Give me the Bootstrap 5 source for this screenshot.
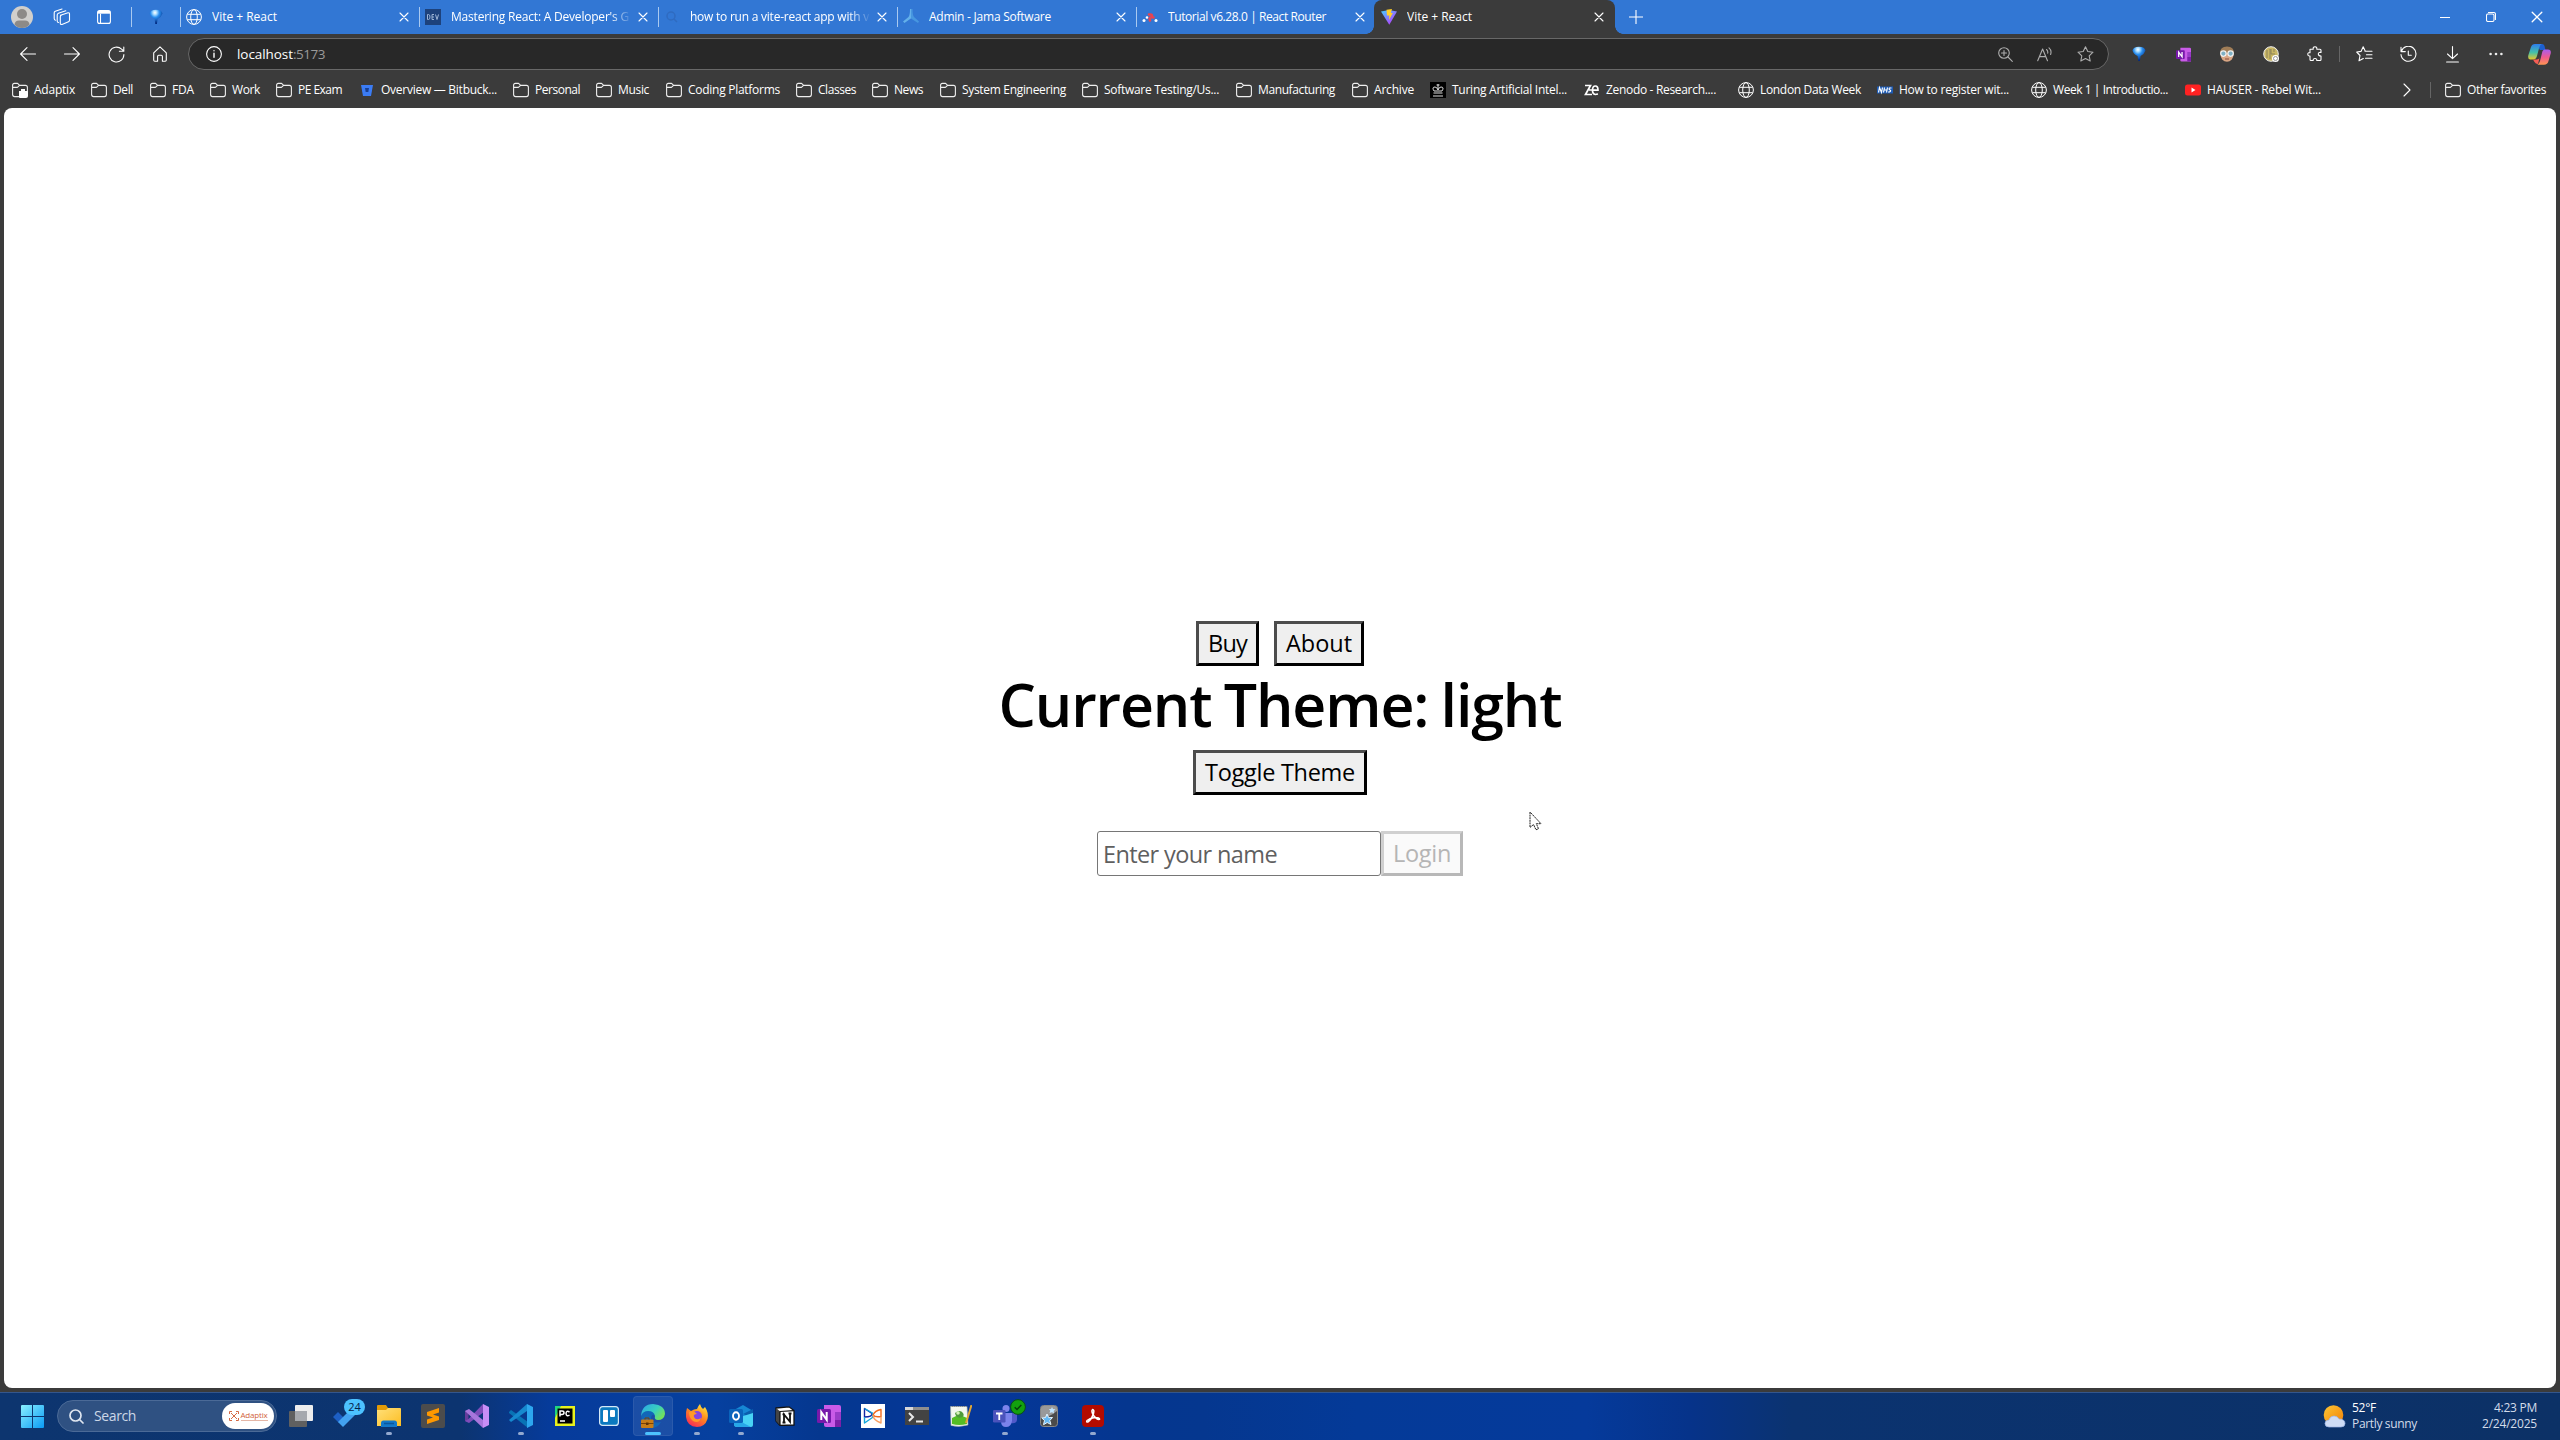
<!DOCTYPE html>
<html lang="en">
<head>
<meta charset="utf-8">
<title>Vite + React</title>
<link rel="stylesheet" href="https://cdn.jsdelivr.net/npm/bootstrap@5.3.0/dist/css/bootstrap.min.css">
<style>
html,body{height:100%;overflow:hidden}
body{background:#3b3b3b;color:#fff;font:12px/16px "Open Sans","Noto Sans",sans-serif}
svg{display:block;flex:none}
.ln{fill:none;stroke:#fff;stroke-width:1.1;stroke-linecap:round;stroke-linejoin:round}
.fit{display:inline-block;white-space:pre;flex:none}
.tabstrip{height:34px;background:#3277d4}
.cell{display:flex;align-items:center;justify-content:center;flex:none}
.vr-line{width:1px;height:20px;background:#a9c9f0;flex:none}
.tab-item{width:239px;height:34px;padding-left:6px;position:relative}
.tab-item .vr-line{margin-left:-6px;margin-right:5px}
.tab-title{width:181px;height:18px;margin-left:10px;overflow:hidden;line-height:18px}
.tab-fade{-webkit-mask-image:linear-gradient(90deg,#000 88%,transparent)}
.tab-close{width:22px}
.tab-live{background:#3b3b3b;border-radius:8px 8px 0 0;width:241px;margin-left:-1px;padding-left:7px}
.tab-live::before,.tab-live::after{content:"";position:absolute;bottom:0;width:8px;height:8px}
.tab-live::before{left:-8px;background:radial-gradient(circle at 0 0,#3277d4 7.5px,#3b3b3b 8px)}
.tab-live::after{right:-8px;background:radial-gradient(circle at 100% 0,#3277d4 7.5px,#3b3b3b 8px)}
.toolbar-row{height:40px}
.tb{width:44px}
.address{height:32px;width:1921px;margin-left:6px;background:#282828;border:1px solid #686868;border-radius:16px;font-size:13.5px;padding-left:17px}
.address .ad{width:40px}
.favrow{height:32px;padding-left:12px;margin-bottom:2px}
.fav{gap:6px;height:32px;flex:none}
.page{height:1280px;margin:0 4px;background:#fff;border-radius:8px;font-family:"Open Sans","Noto Sans",sans-serif;color:#000}
.pb{height:45px;border:3px solid;border-color:#4c4c4c #000 #000 #4c4c4c;background:#efefef;font-size:23.5px;line-height:37px}
.pb-off{color:#b5b5b5;background:#fafafa;border-color:#d0d0d0 #b8b8b8 #b8b8b8 #d0d0d0}
.theme-title{font-size:59px;line-height:76px;font-weight:600;height:84px;margin:0;word-spacing:-2px}
.name-box{width:284px;height:45px;border:1px solid #767676;border-radius:3px;font-size:23.5px;line-height:44px;color:#5f5f5f;padding-left:5px}
.pointer{position:absolute;left:1529px;top:811px}
.taskbar{height:48px;margin-top:4px;border-top:1px solid #34568c;background:linear-gradient(90deg,#0d356f 0,#0c3470 18%,#063b9b 21.5%,#06409f 28%,#05378f 32%,#05379a 38%,#05368f 44%,#05378f 47%,#043a98 53%,#053a9b 62%,#06338a 66%,#0b3370 70%,#0c3166 100%);padding-bottom:1px}
.searchpill{width:220px;height:32px;margin-left:13px;border-radius:16px;background:#2f5182;border:1px solid #4b6a97;font-size:14px;color:#ccd7e7}
.brandpill{width:52px;height:26px;border-radius:13px;background:#fff;color:#d2623c;margin-left:auto;margin-right:2px}
.tk{width:44px;height:46px;position:relative;flex:none}
.tk.run::after,.tk.on::after{content:"";position:absolute;bottom:4px;left:19px;width:6px;height:3px;border-radius:2px;background:#93a9cf}
.tk.on::before{content:"";position:absolute;left:2px;top:3px;width:40px;height:40px;border-radius:4px;background:#ffffff16;border:1px solid #ffffff12}
.tk.on::after{left:14px;width:16px;background:#4cc2ff}
.tk svg{position:relative}
.cnt{position:absolute;left:21px;top:6px;width:21px;height:16px;border-radius:8px;background:#4cc2ff;color:#04204a;font-size:11px;line-height:16px;text-align:center}
.okdot{position:absolute;left:27px;top:6px}
.dimtext{color:#d3dcea}
</style>
<script src="https://cdn.jsdelivr.net/npm/bootstrap@5.3.0/dist/js/bootstrap.bundle.min.js"></script>
</head>
<body>
<svg width="0" height="0" class="position-absolute">
<defs>
<linearGradient id="gwin" x1="0" y1="0" x2="1" y2="1"><stop stop-color="#8af0ff"/><stop offset="1" stop-color="#0a9bf5"/></linearGradient>
<linearGradient id="gvite" x1="0" y1="0" x2=".8" y2="1"><stop stop-color="#41d1ff"/><stop offset="1" stop-color="#bd34fe"/></linearGradient>
<radialGradient id="gfun" cx=".42" cy=".2" r=".75"><stop stop-color="#fff"/><stop offset=".2" stop-color="#a8dcff"/><stop offset=".45" stop-color="#2a8ff0"/><stop offset="1" stop-color="#022a80"/></radialGradient>
<linearGradient id="gcopA" x1="0" y1="0" x2="0" y2="1"><stop stop-color="#2d7df0"/><stop offset=".55" stop-color="#45c0a8"/><stop offset="1" stop-color="#e9c52b"/></linearGradient>
<linearGradient id="gcopB" x1="0" y1="0" x2="0" y2="1"><stop stop-color="#a85cf0"/><stop offset=".5" stop-color="#ee5a90"/><stop offset="1" stop-color="#ff9650"/></linearGradient>
<linearGradient id="gsun" x1="0" y1="0" x2="1" y2="1"><stop stop-color="#fcc534"/><stop offset="1" stop-color="#f28008"/></linearGradient>
<linearGradient id="gedge" x1="0" y1="0" x2="1" y2=".6"><stop stop-color="#2aa5e8"/><stop offset=".6" stop-color="#38cfc0"/><stop offset="1" stop-color="#72e05c"/></linearGradient>
<linearGradient id="gfire" x1=".8" y1="0" x2=".2" y2="1"><stop stop-color="#ffe83c"/><stop offset=".45" stop-color="#ff8a1e"/><stop offset="1" stop-color="#f4245c"/></linearGradient>
<linearGradient id="gfold" x1="0" y1="0" x2="1" y2="1"><stop stop-color="#ffe07a"/><stop offset="1" stop-color="#fcbd22"/></linearGradient>
<symbol id="globe" viewBox="0 0 16 16"><g fill="none" stroke="#fff" stroke-width="1"><circle cx="8" cy="8" r="7.4"/><ellipse cx="8" cy="8" rx="3.3" ry="7.4"/><path d="M1.3 5.3h13.4M1.3 10.7h13.4"/></g></symbol>
<symbol id="folder" viewBox="0 0 16 16"><path fill="none" stroke="#eee" stroke-width="1.1" stroke-linejoin="round" d="M.6 3.2Q.6 1.4 2.4 1.4H5.6L7.6 3.4H13.4Q15.4 3.4 15.4 5.4V12.6Q15.4 14.6 13.4 14.6H2.6Q.6 14.6.6 12.6ZM.6 5.4H5.4L7.6 3.4"/></symbol>
<symbol id="funnel" viewBox="0 0 14 16"><path fill="url(#gfun)" d="M.5 4.500Q1 1 7 .8Q13 1 13.500 4.500Q12.500 8 8.600 10L7.900 15H6.300L5.600 10Q1.500 8 .5 4.500Z"/></symbol>
<symbol id="xx" viewBox="0 0 10 10"><path class="ln" d="M1 1l8 8M9 1l-8 8"/></symbol>
<symbol id="onenote" viewBox="0 0 24 24"><path fill="#c95be8" d="M7 1h15a2 2 0 0 1 2 2v20H9a2 2 0 0 1-2-2z"/><path fill="#9a3cc8" d="M18 8h6v8h-6z"/><path fill="#7c1fa8" d="M18 16h6v7h-6z"/><rect y="5" width="14" height="14" rx="1.500" fill="#7719aa"/><path fill="none" stroke="#fff" stroke-width="2" d="M4.300 16V8.200L9.700 15.800V8"/></symbol>
</defs>
</svg>

<header>
<nav class="tabstrip d-flex align-items-center" aria-label="Tabs">
  <div class="cell" style="width:44px"><svg width="22" height="22" viewBox="0 0 22 22"><circle cx="11" cy="11" r="11" fill="#d1cfcc"/><circle cx="11" cy="8" r="5" fill="#8d8a87"/><path fill="#8d8a87" d="M3.500 18.500Q4 14.400 8 14.400H14Q18 14.400 18.500 18.500Q15.500 22 11 22T3.500 18.500Z"/></svg></div>
  <div class="cell" style="width:36px"><svg class="ln" width="18" height="18" viewBox="0 0 18 18"><path d="M7.500 7.300L15 4.800Q16.500 4.500 16.500 6V12Q16.500 13.300 15.500 13.700L9 16.400Q7.300 16.800 7.300 15.200V8.800Q7.300 7.700 8.300 7.200M5.500 14.500Q4.200 14.500 4.200 13V7Q4.200 5.700 5.400 5.200L12.800 2.800M2.500 12.200Q1.200 12 1.200 10.600V4.800Q1.200 3.700 2.300 3.200L9 1"/></svg></div>
  <div class="cell" style="width:48px"><svg class="ln" width="14" height="14" viewBox="0 0 14 14"><rect x=".6" y=".6" width="12.800" height="12.800" rx="2"/><path fill="#fff" stroke="none" d="M1 1h12v2.700H1z"/><path d="M3.500 4v9"/></svg></div>
  <div class="cell" style="width:3px"></div><div class="vr-line"></div>
  <div class="cell" style="width:48px"><svg width="14" height="16"><use href="#funnel"/></svg></div>
  <div class="d-flex" id="tabs"></div>
  <div class="cell" style="width:41px"><svg class="ln" width="14" height="14" viewBox="0 0 14 14"><path d="M7 0v14M0 7h14"/></svg></div>
  <div class="d-flex ms-auto">
    <div class="cell" style="width:46px"><svg class="ln" width="10" height="10" viewBox="0 0 10 10"><path d="M0 5.500h10"/></svg></div>
    <div class="cell" style="width:46px"><svg class="ln" width="10" height="10" viewBox="0 0 10 10"><rect x=".5" y="2" width="7.500" height="7.500" rx="1.500"/><path d="M2.500.5H7.500Q9.500.5 9.500 2.500V7.500"/></svg></div>
    <div class="cell" style="width:46px"><svg width="12" height="12"><use href="#xx"/></svg></div>
  </div>
</nav>

<div class="toolbar-row d-flex align-items-center ps-1">
  <div class="cell" style="width:2px"></div>
  <div class="cell tb"><svg class="ln" width="16" height="14" viewBox="0 0 16 14"><path d="M15.500 7H.8M7 .6L.6 7L7 13.400"/></svg></div>
  <div class="cell tb"><svg class="ln" width="16" height="14" viewBox="0 0 16 14"><path d="M.5 7h14.700M9 .6L15.400 7L9 13.400"/></svg></div>
  <div class="cell tb"><svg class="ln" width="17" height="17" viewBox="0 0 17 17"><path d="M15.900 8.500A7.400 7.400 0 1 1 13.600 3.200L15.700 5M15.800 1v4.200h-4.400"/></svg></div>
  <div class="cell tb"><svg class="ln" width="14" height="16" viewBox="0 0 14 16"><path d="M.7 6.800L7 .9L13.300 6.800V14Q13.300 15.200 12.200 15.200H9.400V10.400Q9.400 9.300 8.300 9.300H5.700Q4.600 9.300 4.600 10.400V15.200H1.800Q.7 15.200.7 14Z"/></svg></div>
  <div class="address d-flex align-items-center">
    <svg class="ln" width="16" height="16" viewBox="0 0 16 16"><circle cx="8" cy="8" r="7.400"/><path d="M8 7.300v4M8 4.600v.2" stroke-width="1.400"/></svg>
    <div style="margin-left:15px"><span class="fit" data-w="56">localhost</span><span class="fit" style="color:#9a9a9a" data-w="32">:5173</span></div>
    <div class="d-flex ms-auto" style="padding-right:3px;opacity:.62">
      <div class="cell ad"><svg class="ln" width="15" height="15" viewBox="0 0 15 15"><circle cx="6" cy="6" r="5.300"/><path d="M10 10l4.300 4.300M6 3.500v5M3.500 6h5"/></svg></div>
      <div class="cell ad"><svg class="ln" width="16" height="15" viewBox="0 0 16 15"><path d="M.7 13.800L5.600 2L10.500 13.800M2.500 9.600h6.200M9.500 2.500Q11.200 4 10.700 6.200M12 .8Q15 3.500 13.600 7.500"/></svg></div>
      <div class="cell ad"><svg class="ln" width="17" height="16" viewBox="0 0 17 16"><path d="M8.500.8L10.800 5.500L16 6.200L12.200 9.800L13.200 15L8.500 12.500L3.800 15L4.800 9.800L1 6.200L6.200 5.500Z"/></svg></div>
    </div>
  </div>
  <div class="d-flex align-items-center ms-auto">
    <div class="cell tb"><svg width="14" height="16"><use href="#funnel"/></svg></div>
    <div class="cell tb"><svg width="15" height="15"><use href="#onenote"/></svg></div>
    <div class="cell tb"><svg width="16" height="16" viewBox="0 0 16 16"><ellipse cx="8" cy="8.500" rx="6.500" ry="7.300" fill="#d9a684"/><path fill="#a07d57" d="M1 7Q1 1 8 .6Q15 1 15 7Z"/><g fill="#7fb0c4" stroke="#f0f0f0" stroke-width="1.200"><circle cx="4.400" cy="7.600" r="2.700"/><circle cx="11.600" cy="7.600" r="2.700"/></g><path stroke="#8c4a3b" d="M6 13h4"/></svg></div>
    <div class="cell tb"><svg width="17" height="17" viewBox="0 0 17 17"><circle cx="8" cy="8" r="7.300" fill="#c9b765" stroke="#eee"/><path fill="none" stroke="#8b8158" stroke-width="1" d="M4 4v8M7 3v10M8 3v5h4M11 3v3"/><circle cx="12.500" cy="12.500" r="3.500" fill="#fff"/><circle cx="12.500" cy="12.500" r="2" fill="none" stroke="#999"/></svg></div>
    <div class="cell tb"><svg class="ln" width="16" height="16" viewBox="0 0 16 16"><path d="M3 3.200H6.200Q5.800.7 8 .7T9.800 3.200H13Q14 3.200 14 4.200V6.500Q11.300 6 11.300 8T14 10V13.500Q14 14.500 13 14.500H9.800Q10 12.500 8 12.500T6.200 14.500H4Q3 14.500 3 13.500V10Q.8 10.200.8 8.300T3 6.600Z"/></svg></div>
    <div class="cell" style="width:5px"><div class="vr-line" style="height:16px;background:#666"></div></div>
    <div class="cell tb"><svg class="ln" width="17" height="16" viewBox="0 0 17 16"><path d="M9.300 5.200L7.200.8L5 5.400L.7 6L4 9.500L3 14.800L7.300 12.600M9 5.300H16M10.500 8.800H16M9.500 12.300H16"/></svg></div>
    <div class="cell tb"><svg class="ln" width="17" height="17" viewBox="0 0 17 17"><path d="M1.300 5.500A7.500 7.500 0 1 1 1 8.600M1 1.300V5.600H5.300M8.300 5V9.300H11.300"/></svg></div>
    <div class="cell tb"><svg class="ln" width="13" height="17" viewBox="0 0 13 17"><path d="M6.500.6V12.500M1.500 8L6.500 12.700L11.500 8M.6 16H12.400"/></svg></div>
    <div class="cell tb"><svg width="14" height="4" viewBox="0 0 14 4"><g fill="#eee"><circle cx="1.600" cy="2" r="1.300"/><circle cx="7" cy="2" r="1.300"/><circle cx="12.400" cy="2" r="1.300"/></g></svg></div>
    <div class="cell" style="width:42px"><svg width="23" height="21" viewBox="0 0 23 21"><path fill="#1d5fd0" d="M8 0H14Q16 0 16.500 2L17.500 6H12Z"/><path fill="url(#gcopA)" d="M7 0H14Q12 .5 11.200 3.500L9 12Q8 15.500 5 15.500H2Q-.6 15 .4 11L3 3Q4 0 7 0Z"/><path fill="#f55d55" d="M5 15.500H9Q12 15 12 12L10 20Q7.500 20 6.500 18Z"/><path fill="url(#gcopB)" d="M16 5.500H20Q23.500 5.500 22.700 9.500L20.500 17Q19.500 20.800 16 20.800H9.500Q11 20 12 17L14 9Q14.500 5.500 17 5.500Z"/></svg></div>
  </div>
</div>

<div class="favrow d-flex align-items-center">
  <div class="d-flex" id="favs"></div>
  <div class="d-flex align-items-center ms-auto" style="padding-right:14px">
    <svg class="ln" width="8" height="14" viewBox="0 0 8 14"><path d="M1 1l6 6l-6 6"/></svg>
    <div class="vr-line" style="height:16px;background:#666;margin:0 14px 0 19px"></div>
    <svg width="16" height="16"><use href="#folder"/></svg><span class="fit" style="margin-left:6px" data-w="79">Other favorites</span>
  </div>
</div>
</header>

<main class="page d-flex flex-column align-items-center" style="padding-top:513px">
  <div class="d-flex" style="gap:15px"><button class="pb p-0 text-center" style="width:63px"><span class="fit" data-w="39">Buy</span></button><button class="pb p-0 text-center" style="width:90px"><span class="fit" data-w="66">About</span></button></div>
  <h1 class="theme-title"><span class="fit" data-w="563">Current Theme: light</span></h1>
  <button class="pb p-0 text-center" style="width:174px"><span class="fit" data-w="150">Toggle Theme</span></button>
  <div class="d-flex" style="margin-top:36px"><div class="name-box"><span class="fit" data-w="174">Enter your name</span></div><button class="pb pb-off p-0 text-center" style="width:82px" disabled><span class="fit" data-w="58">Login</span></button></div>
</main>
<svg class="pointer" width="14" height="20" viewBox="0 0 14 20"><path fill="#fff" stroke="#222" stroke-width="1" stroke-dasharray="2 .6" d="M1 1V16.500L4.500 13.500L7 18.800L9.500 17.700L7.300 12.700H12Z"/></svg>

<footer class="taskbar d-flex align-items-center">
  <svg width="23" height="23" viewBox="0 0 23 23" style="margin-left:21px"><path fill="url(#gwin)" d="M0 1Q0 0 1 0H11V11H0ZM12 0H22Q23 0 23 1V11H12ZM0 12H11V23H1Q0 23 0 22ZM12 12H23V22Q23 23 22 23H12Z"/></svg>
  <div class="searchpill d-flex align-items-center">
    <svg width="15" height="15" viewBox="0 0 15 15" style="margin-left:11px" fill="none" stroke="#dfe6f0" stroke-width="1.700" stroke-linecap="round"><circle cx="6.500" cy="6.500" r="5.500"/><path d="M10.500 10.500L14 14"/></svg>
    <span class="fit" style="margin-left:10px" data-w="42">Search</span>
    <div class="brandpill d-flex align-items-center justify-content-center">
      <svg width="10" height="10" viewBox="0 0 10 10" fill="none" stroke="#d46a46" stroke-width="1"><path d="M.5 3V.5H3M7 .5H9.500V3M9.500 7V9.500H7M3 9.500H.5V7M2 2L8 8M8 2L2 8"/></svg>
      <div style="margin-left:2px"><div style="font-size:8px;line-height:8px"><span class="fit" data-w="27">Adaptix</span></div><div style="height:1px;background:#e5b7a7;margin-top:1px"></div></div>
    </div>
  </div>
  <div class="d-flex" style="margin-left:2px">
    <div class="tk cell"><svg width="24" height="22" viewBox="0 0 24 22"><rect y="6" width="18" height="16" rx="1" fill="#606060"/><rect x="6" width="18" height="16" rx="1" fill="#ededed"/><path fill="#a6a9ae" d="M6 6h12v10H6z"/></svg></div>
    <div class="tk cell"><svg width="24" height="22" viewBox="0 0 24 22"><path fill="#1d5fc4" d="M0 12L5 7L11 13L6 18Z"/><path fill="#43a2f0" d="M5 17L19 3L24 8L10 22Z"/></svg><span class="cnt">24</span></div>
    <div class="tk cell run"><svg width="24" height="22" viewBox="0 0 24 22"><path fill="#e29b07" d="M0 1Q0 0 1 0H9L11 3H23V8H0Z"/><path fill="url(#gfold)" d="M0 5H9L11 3H23Q24 3 24 4V21H0Z"/><path fill="#1478c8" d="M4 22V18Q4 15.500 6.500 15.500H17.500Q20 15.500 20 18V22Z"/><path stroke="#0b569c" stroke-width="1.500" d="M7 18.500H17"/></svg></div>
    <div class="tk cell"><svg width="24" height="24" viewBox="0 0 24 24"><rect width="24" height="24" rx="2" fill="#4c4c4c"/><path fill="#ff9800" d="M6 8L18 4V8.500L12 10.500L18 12.500V16L6 20V15.500L12 13.500L6 11.500Z"/></svg></div>
    <div class="tk cell"><svg width="24" height="24" viewBox="0 0 24 24"><path fill="#653c9c" d="M0 7L3.500 5.500V18.500L0 17Z"/><path fill="#7e4dba" d="M0 17L3.500 15L18 0L19 8L4 19Z"/><path fill="#a776dc" d="M0 7L4 5L18 16V24Z"/><path fill="#c78ef6" d="M18 0L24 3V21L18 24Z"/></svg></div>
    <div class="tk cell run"><svg width="24" height="24" viewBox="0 0 24 24"><path fill="#0873b5" d="M0 8L2 6L19 18V24L0 9Z"/><path fill="#1689cf" d="M0 16L18 0V7L2 18Z"/><path fill="#2da7ef" d="M18 0L24 3V21L18 24Z"/></svg></div>
    <div class="tk cell"><svg width="20" height="20" viewBox="0 0 20 20"><path fill="#22d77c" d="M0 0H20V20H0Z"/><path fill="#e7f11c" d="M6 0H20V20H0V12Z"/><path d="M2.500 2.500H17.500V17.500H2.500Z"/><path fill="none" stroke="#fff" stroke-width="1.500" d="M5 10.500V5H7Q9 5 9 6.700T7 8.400H5M14.500 6Q11.300 4 11 7.500Q11.300 11 14.500 9.200M5 15H10"/></svg></div>
    <div class="tk cell"><svg width="20" height="20" viewBox="0 0 20 20"><rect x=".6" y=".6" width="18.800" height="18.800" rx="3" fill="#0b79bf" stroke="#d4e8f6" stroke-width="1.200"/><rect x="4" y="4" width="5" height="12" rx="1" fill="#fff"/><rect x="11" y="4" width="5" height="7" rx="1" fill="#fff"/></svg></div>
    <div class="tk cell on"><svg width="24" height="24" viewBox="0 0 24 24"><path fill="#1266b8" d="M0 12Q2 5 10 7Q14 8 14 11Q10 10 10 15Q11 20 20 18Q17 24 10 24Q1 22 0 12Z"/><path fill="url(#gedge)" d="M0 12Q1 0 12 0Q24 1 24 10Q23 16 17 16Q13 16 14 12Q13 7 7 7Q2 7 0 12Z"/><rect y="15.500" width="12.500" height="8.500" rx="1" fill="#c77d18"/><path fill="none" stroke="#7a4208" stroke-width="1" d="M4 15.500V14H8V15.500M0 19.500H12.500"/><path fill="#5f3204" d="M5 18.500h2.500V21H5z"/></svg></div>
    <div class="tk cell run"><svg width="24" height="24" viewBox="0 0 24 24"><path fill="url(#gfire)" d="M2 4L6 7Q9 5 12 5Q13 2 15 0Q16 4 18 5L20 3Q24 9 22.500 15Q20 23 12 23Q2 22.500 1 13Q.5 8 2 4Z"/><circle cx="12" cy="12" r="5" fill="#8545e0"/><path fill="#ff9a27" d="M4 8Q9 6 12 10Q8 10 9 13Q11 17 16 14Q14 20 8 17Q4 14 4 8Z"/></svg></div>
    <div class="tk cell run"><svg width="25" height="24" viewBox="0 0 25 24"><path fill="#1687d4" d="M5 6L14 1L24 7V12L14 17L5 12Z"/><path fill="#0a5fae" d="M14 10L24 5V14Z"/><path fill="#48d3f5" d="M5 15L24 9V21Q24 23 22 23H8Q5 23 5 20Z"/><path fill="#27a8e8" d="M5 14L22 23H8Q5 23 5 20Z"/><rect y="5" width="14" height="14" rx="1.500" fill="#0a64bc"/><ellipse cx="7" cy="12" rx="3" ry="3.700" fill="none" stroke="#fff" stroke-width="1.900"/></svg></div>
    <div class="tk cell"><svg width="20" height="20" viewBox="0 0 20 20"><path fill="#fff" stroke="#111" stroke-width="1.300" d="M1 2L14 .8L19 4.500V19L5 19.500L1 15Z"/><path fill="#444" d="M1 2L5 5.300V19.300L1 15Z"/><path fill="none" stroke="#111" stroke-width="1.200" d="M5 5.500L19 4.600M5 5.500V19"/><path fill="none" stroke="#111" stroke-width="1.800" d="M9 16.500V8.500L15 15.800V7.500M7.500 8.300H10M13.500 7.500H16.500M7.500 16.500H10.500"/></svg></div>
    <div class="tk cell"><svg width="24" height="24"><use href="#onenote"/></svg></div>
    <div class="tk cell"><svg width="24" height="24" viewBox="0 0 24 24"><path fill="#fff" d="M0 0H24V24H0Z"/><g fill="none" stroke-width="1.400" stroke-linejoin="round"><path stroke="#1425a5" d="M3.500 13V4.500L11 9.500Q11.500 13 3.500 13Z"/><path stroke="#14a7dc" d="M3.500 13V19L11.500 13.500V9L3.500 4.500"/><path stroke="#f26a1a" d="M12 11Q14 6.500 20 5.500V12.500Q14 13.500 12 11Z"/><path stroke="#f9a062" d="M12 11Q12 16 20 19V12.500"/></g></svg></div>
    <div class="tk cell"><svg width="24" height="18" viewBox="0 0 24 18"><path fill="#434343" d="M0 0H24V18H0Z"/><path fill="#d7d7d7" d="M0 0H8V3H0Z"/><path fill="#8e8e8e" d="M8 0H24V3H8Z"/><path fill="none" stroke="#e8e8e8" stroke-width="2" d="M4 6L8 10L4 14M11 14.500H18"/></svg></div>
    <div class="tk cell"><svg width="22" height="22" viewBox="0 0 22 22"><path fill="#f3f7ef" stroke="#aab6aa" stroke-width=".6" d="M.5 1.500H17L18 20Q9 22.500 1 20.500Z"/><path fill="#55bd24" d="M2 13Q9 8 17 13V19Q9 21 2 19Z"/><path fill="#4f9a3a" d="M5 8Q10 4 13 8Q15 11 11 12.500Q6 13.500 5 8Z"/><circle cx="8" cy="8" r="1.800" fill="#d7f3b8"/><path stroke="#e3a632" stroke-width="2" d="M21.500 0L16 18"/><path stroke="#888" stroke-dasharray="1 1" d="M2 1.500H17"/></svg></div>
    <div class="tk cell run"><svg width="24" height="22" viewBox="0 0 24 22"><circle cx="13" cy="3.500" r="3.500" fill="#7b83eb"/><path fill="#5059c9" d="M15 8H24V15Q23 19 18 18Z"/><path fill="#7b83eb" d="M8 8H19V16Q18 22 13 22T8 16Z"/><rect y="5" width="12.500" height="12.500" rx="1.200" fill="#4b53bc"/><path stroke="#fff" stroke-width="1.800" d="M3 8.500H9.500M6.250 8.500V15"/></svg><span class="okdot"><svg width="16" height="16" viewBox="0 0 16 16"><circle cx="8" cy="8" r="7.400" fill="#13a10e" stroke="#0a4b1c"/><path fill="none" stroke="#053f0a" stroke-width="1.500" d="M4.700 8.300L7 10.500L11.300 6"/></svg></span></div>
    <div class="tk cell"><svg width="18" height="22" viewBox="0 0 18 22"><rect x=".5" y=".5" width="17" height="21" rx="3" fill="#4b4b4b" stroke="#888"/><path fill="#999" d="M1 3Q1 1 3 1H15Q17 1 17 3V6Q10 12 1 13Z"/><path fill="#64b8f3" stroke="#e8f6ff" d="M7 9L8.700 12.700L12.500 12.500L9.800 15.500L11 19.500L7.200 17.500L3.500 19.700L4.500 15.500L1.800 13L5.500 12.600Z"/><path fill="#bfe4ff" d="M12 2L13 4L15.500 4.200L13.700 6L14 8.500L12 7.200L9.500 8L10.300 5.700L8.800 4L11 3.900Z"/></svg></div>
    <div class="tk cell run"><svg width="22" height="22" viewBox="0 0 22 22"><rect width="22" height="22" rx="4" fill="#b30b00"/><path fill="none" stroke="#fff" stroke-width="1.500" d="M10.700 4.500Q12.500 5 11.500 8.500Q10 14 6 17Q4 17.500 5 15.500Q8 13 13 12.500Q18 12.500 17.500 14.300Q15 15 12 11Q9.500 7.500 10 5.300Z"/></svg></div>
  </div>
  <div class="d-flex align-items-center ms-auto">
    <svg width="23" height="23" viewBox="0 0 23 23"><circle cx="10.500" cy="10" r="9.800" fill="url(#gsun)"/><path fill="#cfdcf5" stroke="#9db5e6" stroke-width=".7" d="M6 22Q2 22 2 18.500T6 15Q7 11 11 11Q14.500 11 16 14Q22 14 22 18.500Q22 22 18 22Z"/></svg>
    <div style="margin-left:6px;width:130px"><div><span class="fit" data-w="24">52°F</span></div><div class="dimtext"><span class="fit" data-w="65">Partly sunny</span></div></div>
    <div class="dimtext text-end" style="padding-right:23px"><div><span class="fit" data-w="43">4:23 PM</span></div><div><span class="fit" data-w="55">2/24/2025</span></div></div>
  </div>
</footer>
<script>
const svg = (b, w = 16) => `<svg width="${w}" height="16" viewBox="0 0 16 16">${b}</svg>`;
const use = id => `<svg width="16" height="16"><use href="#${id}"/></svg>`;
const tabs = [
 [use('globe'), 'Vite + React', 65],
 [svg('<path fill="#1d427c" d="M0 0h16v16H0z"/><path fill="none" stroke="#9db5d6" d="M2.500 5.500v5h1Q5 10.500 5 8T3.500 5.500ZM9 5.500H7v5h2M7 8h2M10.500 5.500l1.500 5l1.500-5"/>'), "Mastering React: A Developer's G", 178],
 [svg('<g fill="none" stroke="#2f6bc0" stroke-width="1.500"><circle cx="7" cy="7" r="4"/><path d="M10 10l3 3"/></g>'), 'how to run a vite-react app with v', 179],
 [svg('<path fill="#63b0ea" d="M7 0H8.500V9L1.500 14L0 12.500L5.500 8Q7 6 7 0Z"/><path fill="#4797e0" d="M8.500 0H9.500Q9.500 6 11 8L16 12.500L15 14L8 9.500Z"/>'), 'Admin - Jama Software', 122],
 [svg('<g fill="#fff"><circle cx="5" cy="8.500" r="1.300"/><circle cx="2" cy="11.500" r="1.500"/><circle cx="14" cy="11.500" r="1.500"/></g><path fill="none" stroke="#e84350" stroke-width="2.500" stroke-linecap="round" d="M7 5.500h1.500q1.500 0 1.500 1.500t-1.500 1.500t-.5 3M11 8.500h.5"/>'), 'Tutorial v6.28.0 | React Router', 158],
 [svg('<path fill="url(#gvite)" d="M0 2.500L8 1L16 2.500L8.300 15.800z"/><path fill="#ffcf28" d="M5.500.8L11 0L9.800 4h2L8 11l.3-4.500H6z"/>'), 'Vite + React', 65]];
document.getElementById('tabs').innerHTML = tabs.map(([i, t, w], k) =>
 `<div class="tab-item d-flex align-items-center ${k == 5 ? 'tab-live' : ''}">${k < 5 ? '<div class="vr-line"></div>' : ''}${i}<div class="tab-title ${w > 170 ? 'tab-fade' : ''}"><span class="fit" data-w="${w}">${t}</span></div><div class="tab-close cell"><svg width="10" height="10"><use href="#xx"/></svg></div></div>`).join('');
const F = use('folder'), G = use('globe');
const favs = [
 [svg('<use href="#folder"/><path fill="#fff" d="M7 9h2V7h4v2h2q1 0 1 1v4q0 2-2 2H8q-1 0-1-1z"/>'), 'Adaptix', 12, 41], [F,'Dell',91,20],[F,'FDA',150,22],[F,'Work',210,28],[F,'PE Exam',276,44],
 [svg('<path fill="#3b7cf5" d="M2 3h12l-2 11H4z"/><path fill="#173f92" d="M6 6h4l-.7 4H6.700z"/>'), 'Overview — Bitbuck...',359,116],
 [F,'Personal',513,45],[F,'Music',596,31],[F,'Coding Platforms',666,92],[F,'Classes',796,38],[F,'News',872,29],[F,'System Engineering',940,104],[F,'Software Testing/Us...',1082,115],[F,'Manufacturing',1236,77],[F,'Archive',1352,40],
 [svg('<path d="M0 0h16v16H0z"/><path fill="none" stroke="#ddd" d="M4 9Q1.500 5 5 5Q7 5 8 8Q9 5 11 5Q14.500 5 12 9ZM8 2v6M6.500 3h3M3.500 11h9M3 14h10"/>'),'Turing Artificial Intel...',1430,115],
 [svg('<path fill="none" stroke="#fff" stroke-width="1.700" d="M1 3.500h5.500L1.500 12.500H8M8.500 8.200h5.500Q14 4 11.300 4T8.500 8T11.300 12.500L14 12M5 8h3"/>'),'Zenodo - Research....',1584,110],
 [G,'London Data Week',1738,101],
 [svg('<path fill="#1d5bb4" d="M0 4.500h16v7H0z"/><path fill="none" stroke="#fff" stroke-width="1.200" d="M1.500 10.500l1-5l2 5l1-5M6.500 10.500l1-5M9.500 10.500l1-5M7 8h3M14.500 6H12.500Q11.500 7.300 13 8T12.500 10H11"/>'),'How to register wit...',1877,110],
 [G,'Week 1 | Introductio...',2031,115],
 [svg('<rect y="2.500" width="16" height="11" rx="2.500" fill="#f22"/><path fill="#fff" d="M6.500 5.500v5L10.500 8z"/>'),'HAUSER - Rebel Wit...',2185,114]];
document.getElementById('favs').innerHTML = favs.map(([i, t, x, w], k) => {
 const next = favs[k + 1] ? favs[k + 1][2] : x + w + 40;
 return `<div class="fav d-flex align-items-center" style="width:${next - x}px">${i}<span class="fit" data-w="${w}">${t}</span></div>`;
}).join('');
// Track each label to its nominal width.
document.querySelectorAll('.fit').forEach(e => {
 const d = (e.dataset.w - e.getBoundingClientRect().width) / e.textContent.length;
 e.style.letterSpacing = d.toFixed(3) + 'px';
});
</script>
</body>
</html>
